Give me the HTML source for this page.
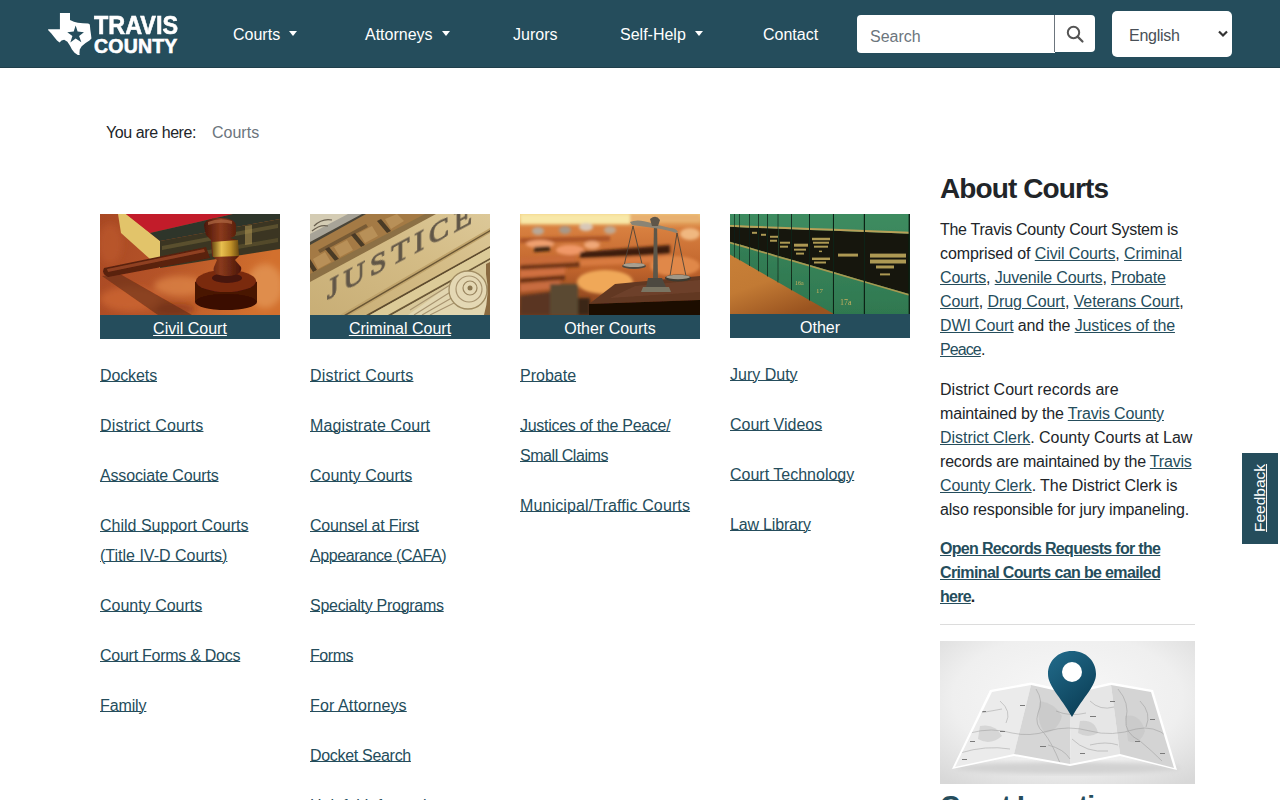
<!DOCTYPE html>
<html><head><meta charset="utf-8">
<style>
*{box-sizing:border-box;margin:0;padding:0}
html,body{width:1280px;height:800px;overflow:hidden;background:#fff}
body{font-family:"Liberation Sans",sans-serif;font-size:16px;color:#212529;position:relative}
.abs{position:absolute}
#hdr{position:absolute;left:0;top:0;width:1280px;height:68px;background:#254d5c}
.nav{position:absolute;top:25px;color:#fff;font-size:16px;line-height:20px;white-space:nowrap}
.caret{display:inline-block;width:0;height:0;border-top:5px solid #fff;border-left:4.5px solid transparent;border-right:4.5px solid transparent;vertical-align:4px;margin-left:9px}
a{color:#254d5c;text-decoration:underline}
.lnk{position:absolute;font-size:16px;line-height:30px;white-space:nowrap;color:#254d5c}
.lnk a{text-decoration-thickness:1px;text-underline-offset:0px}
.card{position:absolute;top:214px;width:180px;height:125px}
.card .img{position:absolute;left:0;top:0;width:180px;height:101px;overflow:hidden}
.card .cap{position:absolute;left:0;top:101px;width:180px;height:24px;background:#254d5c;color:#fff;text-align:center;font-size:16px;line-height:28px;white-space:nowrap}
.card .cap a{color:#fff}
.side{position:absolute;left:940px;font-size:16px;line-height:24px;white-space:nowrap;color:#212529}
.side a{color:#254d5c}
</style></head>
<body>
<div id="hdr">
  <div class="abs" style="left:0;top:67px;width:1280px;height:1px;background:#203f4b"></div>
  <svg class="abs" style="left:44px;top:8px" width="52" height="52" viewBox="0 0 800 800">
    <path fill="#fff" d="M245,75 L400,75 L400,185 L460,210 L520,225 L600,235 L680,240 L705,255 L712,330 L722,400 L730,470 L700,500 L640,540 L580,590 L550,640 L545,700 L550,722 L520,722 L470,690 L430,640 L400,580 L360,520 L310,490 L270,500 L240,530 L200,500 L150,440 L110,390 L62,340 L65,325 L245,325 Z"/>
    <path fill="#254d5c" d="M487,270 L517,362 L615,372 L540,430 L575,527 L487,470 L405,530 L437,432 L358,372 L457,362 Z"/>
  </svg>
  <div class="abs" style="left:94px;top:11px;color:#fff;font-weight:700;font-size:25px;line-height:28px;transform:scaleX(0.936);transform-origin:0 0;-webkit-text-stroke:0.6px #fff">TRAVIS</div>
  <div class="abs" style="left:94px;top:36px;color:#fff;font-weight:700;font-size:19.5px;line-height:20px;letter-spacing:0.2px;-webkit-text-stroke:0.6px #fff">COUNTY</div>

  <div class="nav" style="left:233px">Courts<span class="caret"></span></div>
  <div class="nav" style="left:365px">Attorneys<span class="caret"></span></div>
  <div class="nav" style="left:513px">Jurors</div>
  <div class="nav" style="left:620px">Self-Help<span class="caret"></span></div>
  <div class="nav" style="left:763px">Contact</div>

  <div class="abs" style="left:857px;top:15px;width:198px;height:38px;background:#fff;border-radius:4px 0 0 4px"></div>
  <div class="abs" style="left:870px;top:27px;color:#6c757d;font-size:16px;line-height:20px">Search</div>
  <div class="abs" style="left:1054px;top:15px;width:41px;height:37px;background:#fff;border-left:1px solid #6c757d;border-radius:0 4px 4px 0"></div>
  <svg class="abs" style="left:1065px;top:24px" width="20" height="20" viewBox="0 0 20 20"><circle cx="8.5" cy="8.5" r="5.7" fill="none" stroke="#555" stroke-width="2"/><path d="M12.6,12.6 L17.5,17.5" stroke="#555" stroke-width="2.2" stroke-linecap="round"/></svg>

  <div class="abs" style="left:1112px;top:11px;width:120px;height:46px;background:#fff;border-radius:5px"></div>
  <div class="abs" style="left:1129px;top:26px;color:#495057;font-size:16px;line-height:20px;letter-spacing:-0.25px">English</div>
  <svg class="abs" style="left:1217px;top:29px" width="12" height="10" viewBox="0 0 12 10"><path d="M2,2.5 L6,6.5 L10,2.5" fill="none" stroke="#333" stroke-width="2.2"/></svg>
</div>

<div class="abs" style="left:106px;top:123px;font-size:16px;line-height:20px;white-space:nowrap;color:#212529;letter-spacing:-0.42px">You are here:</div>
<div class="abs" style="left:212px;top:123px;font-size:16px;line-height:20px;white-space:nowrap;color:#6c757d">Courts</div>

<!-- cards -->
<div class="card" style="left:100px"><div class="img"><svg width="180" height="101" viewBox="0 0 180 101">
<defs>
<linearGradient id="wood1" x1="0" y1="0" x2="1" y2="0.2"><stop offset="0" stop-color="#a84824"/><stop offset="0.45" stop-color="#b65428"/><stop offset="1" stop-color="#d2702e"/></linearGradient>
<linearGradient id="gold1" x1="0" y1="0" x2="1" y2="0"><stop offset="0" stop-color="#6a4a10"/><stop offset="0.35" stop-color="#e8c050"/><stop offset="0.7" stop-color="#c09028"/><stop offset="1" stop-color="#6a4a10"/></linearGradient>
<linearGradient id="hd1" x1="0" y1="0" x2="1" y2="0"><stop offset="0" stop-color="#4a1608"/><stop offset="0.45" stop-color="#8a3a1c"/><stop offset="1" stop-color="#4a1608"/></linearGradient>
<filter id="bl1"><feGaussianBlur stdDeviation="0.7"/></filter>
<filter id="bl1b"><feGaussianBlur stdDeviation="3"/></filter>
</defs>
<rect width="180" height="101" fill="url(#wood1)"/>
<g filter="url(#bl1b)">
<ellipse cx="30" cy="85" rx="30" ry="12" fill="#d06a34" opacity="0.7"/>
<ellipse cx="80" cy="72" rx="26" ry="10" fill="#e08848" opacity="0.7"/>
<ellipse cx="165" cy="72" rx="18" ry="22" fill="#e8a060" opacity="0.6"/>
<ellipse cx="10" cy="30" rx="12" ry="20" fill="#c05a2c" opacity="0.6"/>
<ellipse cx="75" cy="95" rx="20" ry="6" fill="#7a2a10" opacity="0.5"/>
</g>
<g filter="url(#bl1)">
<path d="M2,62 L20,60 L92,101 L58,101 Z" fill="#5a2410" opacity="0.55"/>
<path d="M18,0 L26,0 L60,27 L60,54 L21,19 Z" fill="#e2c46a"/>
<path d="M26,0 L133,0 L50,19 Z" fill="#c21e2a"/>
<path d="M50,19 L133,0 L180,0 L180,5 L60,27 Z" fill="#2e342c"/>
<path d="M60,27 L180,5 L180,35 L60,54 Z" fill="#3a3622"/>
<path d="M62,32 L178,10 L178,14 L62,36 Z" fill="#7a6a3a" opacity="0.5"/>
<path d="M62,44 L178,24 L178,28 L62,48 Z" fill="#7a6a3a" opacity="0.4"/>
<path d="M145,12 L152,11 L152,30 L145,31 Z" fill="#a89050" opacity="0.6"/>
<path d="M4,54 L106,33 L110,44 L8,63 Q1,60 4,54 Z" fill="#5a200e"/>
<path d="M7,55 L104,35 L105,38 L8,58 Z" fill="#9c4a26" opacity="0.8"/>
<ellipse cx="126" cy="70" rx="31" ry="12" fill="#4a1406"/>
<rect x="95" y="68" width="62" height="20" fill="#4a1406"/>
<ellipse cx="126" cy="88" rx="31" ry="8" fill="#3a1004"/>
<ellipse cx="126" cy="67" rx="30" ry="11" fill="#7a2a10"/>
<ellipse cx="127" cy="64" rx="15" ry="5" fill="#3a1006" opacity="0.8"/>
<path d="M104,12 Q104,4 120,4 Q136,4 136,12 L136,19 Q136,23 130,24 L137,26 L139,42 L135,46 L141,53 Q143,61 128,62 Q111,62 114,53 L117,46 L112,42 L111,26 L106,21 Z" fill="url(#hd1)"/>
<path d="M112,28 L138,26 L139,42 L113,43 Z" fill="url(#gold1)"/>
<path d="M108,8 Q120,3 132,7 L132,10 Q120,7 108,11 Z" fill="#b06a44" opacity="0.7"/>
</g>
</svg></div><div class="cap"><a>Civil Court</a></div></div>
<div class="card" style="left:310px"><div class="img"><svg width="180" height="101" viewBox="0 0 180 101">
<defs>
<linearGradient id="st1" x1="0" y1="1" x2="1" y2="0"><stop offset="0" stop-color="#c8ae76"/><stop offset="0.6" stop-color="#d4bc86"/><stop offset="1" stop-color="#dcc898"/></linearGradient>
<filter id="bl2"><feGaussianBlur stdDeviation="0.6"/></filter>
</defs>
<rect width="180" height="101" fill="url(#st1)"/>
<g filter="url(#bl2)">
<path d="M0,0 L124,0 L0,67 Z" fill="#a47a44"/>
<path d="M0,0 L56,0 L0,31 Z" fill="#4a4438"/>
<path d="M0,0 L52,0 L0,28 Z" fill="#a8a498"/>
<path d="M0,0 L38,0 L0,20 Z" fill="#d4ccb4"/>
<path d="M4,12 Q12,4 22,6 M2,17 Q10,10 18,12" stroke="#6a6050" stroke-width="1.2" fill="none"/>
<g fill="#b89058">
<path d="M3,45 L15,38 L21,48 L8,55 Z"/><path d="M24,33 L37,26 L43,36 L30,43 Z"/><path d="M49,19 L62,12 L68,22 L55,29 Z"/><path d="M75,5 L87,0 L94,7 L81,15 Z"/>
</g>
<g fill="#4a3a26">
<path d="M19,33 L29,45 L25,47 L15,35 Z"/><path d="M45,19 L55,31 L51,33 L41,21 Z"/><path d="M71,5 L81,17 L77,19 L67,7 Z"/><path d="M0,45 L7,56 L3,58 L0,53 Z"/>
<path d="M8,36 L56,10 L58,13 L10,39 Z" opacity="0.5"/>
</g>
<path d="M0,60 L115,0 L126,0 L0,68 Z" fill="#8c7044"/>
<path d="M30,101 L180,14 L180,19 L40,101 Z" fill="#c0a46c"/>
<path d="M34,101 L180,16 L180,17.5 L37,101 Z" fill="#6a5634"/>
<path d="M56,101 L180,32 L180,34 L60,101 Z" fill="#5e4c2e"/>
<path d="M60,101 L180,34 L180,44 L78,101 Z" fill="#dccb98"/>
<path d="M78,101 L180,44 L180,46 L82,101 Z" fill="#6a5838"/>
<path d="M82,101 L180,46 L180,101 Z" fill="#d8c89a"/>
<path d="M98,101 L150,64 Q168,56 176,70 L180,70 L180,101 Z" fill="#e2d6b0"/>
<path d="M100,96 L148,66 M104,101 L150,72 M112,101 L152,78 M120,101 L154,84" stroke="#a89470" stroke-width="1.1" fill="none"/>
<circle cx="158" cy="76" r="19" fill="#e4d8b4"/>
<circle cx="158" cy="76" r="19" fill="none" stroke="#a08c62" stroke-width="1.3"/>
<circle cx="159" cy="75" r="13" fill="none" stroke="#a89470" stroke-width="1.2"/>
<circle cx="160" cy="74" r="7" fill="none" stroke="#9a8660" stroke-width="1.2"/>
<circle cx="160" cy="74" r="2.5" fill="#8a7650"/>
<path d="M176,50 L180,48 L180,101 L174,101 Q180,80 176,60 Z" fill="#8a6a40"/>
</g>
<g transform="translate(17,86) skewY(-28)" filter="url(#bl2)">
<text x="0" y="0" font-family="Liberation Serif" font-size="30" fill="#5e5446" stroke="#6a5e4c" stroke-width="1.1" textLength="145" lengthAdjust="spacing">JUSTICE</text>
</g>
</svg></div><div class="cap"><a>Criminal Court</a></div></div>
<div class="card" style="left:520px"><div class="img"><svg width="180" height="101" viewBox="0 0 180 101">
<defs>
<linearGradient id="ct1" x1="0" y1="0" x2="0" y2="1"><stop offset="0" stop-color="#f0d080"/><stop offset="0.14" stop-color="#d88040"/><stop offset="0.55" stop-color="#c0642c"/><stop offset="1" stop-color="#7a3a1a"/></linearGradient>
<filter id="bl3"><feGaussianBlur stdDeviation="1.8"/></filter>
<filter id="bl3b"><feGaussianBlur stdDeviation="0.45"/></filter>
</defs>
<rect width="180" height="101" fill="url(#ct1)"/>
<g filter="url(#bl3)">
<rect x="0" y="0" width="110" height="10" fill="#f8e8a8"/>
<rect x="110" y="0" width="70" height="8" fill="#e8b070"/>
<ellipse cx="18" cy="17" rx="6" ry="4" fill="#b8a898"/>
<ellipse cx="45" cy="16" rx="6" ry="4" fill="#a89888"/>
<ellipse cx="66" cy="13" rx="7" ry="4" fill="#d8c8b8"/>
<ellipse cx="90" cy="16" rx="6" ry="4" fill="#c0a890"/>
<path d="M0,24 L90,22 L90,27 L0,29 Z" fill="#a04a20" opacity="0.8"/>
<ellipse cx="20" cy="30" rx="14" ry="4" fill="#f0a070"/>
<ellipse cx="50" cy="36" rx="14" ry="5" fill="#f09868"/>
<ellipse cx="72" cy="31" rx="8" ry="4" fill="#f0a878"/>
<path d="M14,33 L30,32 L30,37 L14,38 Z" fill="#3a2410"/>
<path d="M60,38 L150,31 L150,41 L60,44 Z" fill="#3e1a0a"/>
<path d="M0,44 L55,41 L55,48 L0,51 Z" fill="#c86a38"/>
<path d="M0,56 L45,52 L45,60 L0,64 Z" fill="#d07040"/>
<path d="M0,70 L40,66 L40,74 L0,78 Z" fill="#c86c40"/>
<path d="M0,51 L60,48 L60,53 L0,56 Z" fill="#5a2810" opacity="0.8"/>
<path d="M0,64 L45,61 L45,66 L0,69 Z" fill="#5a2810" opacity="0.8"/>
<path d="M60,46 L150,40 L150,48 L60,52 Z" fill="#d87a40"/>
<ellipse cx="85" cy="68" rx="28" ry="12" fill="#f0a858"/>
<path d="M0,82 L30,78 L30,101 L0,101 Z" fill="#5a3420"/>
<rect x="30" y="70" width="28" height="31" fill="#5a4a30"/>
<rect x="58" y="84" width="12" height="17" fill="#3a2818"/>
<ellipse cx="155" cy="52" rx="25" ry="10" fill="#e08848"/>
<ellipse cx="170" cy="20" rx="10" ry="6" fill="#f0b880"/>
</g>
<g filter="url(#bl3b)">
<path d="M69,90 L95,70 L180,62 L180,86 Z" fill="#623822"/>
<path d="M90,84 L115,72 L180,66 L180,78 Z" fill="#744630" opacity="0.6"/>
<path d="M69,90 L180,86 L180,101 L69,101 Z" fill="#1a0c06"/>
<path d="M134,6 L137,6 L138,68 L133,68 Z" fill="#5c564a"/>
<path d="M110,8 Q118,4 134,10 L150,14 Q156,14 158,18 L156,19 Q148,16 134,14 L112,11 Z" fill="#8a8474"/>
<path d="M113,12 L104,52 M113,12 L122,50 M157,19 L150,62 M157,19 L166,62" stroke="#4e4438" stroke-width="0.9" fill="none"/>
<ellipse cx="114" cy="52" rx="12" ry="3" fill="#4e4a40"/>
<ellipse cx="114" cy="51" rx="11" ry="2" fill="#a8a090"/>
<ellipse cx="158" cy="64" rx="13" ry="3.5" fill="#3e3a30"/>
<ellipse cx="158" cy="63" rx="12" ry="2.2" fill="#a09888"/>
<path d="M128,64 L142,64 L146,73 L126,73 Z" fill="#4e4a40"/>
<path d="M123,73 L149,73 L151,78 L121,78 Z" fill="#7a7464"/>
<path d="M130,5 Q136,0 140,6 L138,12 L132,12 Z" fill="#5e564a"/>
</g>
</svg></div><div class="cap">Other Courts</div></div>
<div class="card" style="left:730px;top:214px;height:124px"><div class="img" style="height:100px"><svg width="180" height="100" viewBox="0 0 180 101" preserveAspectRatio="none">
<defs>
<linearGradient id="fl1" x1="0" y1="0" x2="0.6" y2="1"><stop offset="0" stop-color="#c88038"/><stop offset="0.5" stop-color="#c27a34"/><stop offset="1" stop-color="#9a5420"/></linearGradient>
<linearGradient id="gr1" x1="0" y1="0" x2="0" y2="1"><stop offset="0" stop-color="#3e8c60"/><stop offset="1" stop-color="#2f7850"/></linearGradient>
<filter id="bl4"><feGaussianBlur stdDeviation="0.5"/></filter>
</defs>
<rect width="180" height="101" fill="#1e3a28"/>
<path d="M0,38 L0,101 L106,101 Z" fill="url(#fl1)"/>
<g filter="url(#bl4)">
<path d="M0,0 L5,0 L5,43.9 L0,41.0 Z" fill="url(#gr1)"/><path d="M0,13.0 L5,13.2 L5,29.5 L0,28.0 Z" fill="#15160e"/><path d="M0,11.0 L5,11.2 L5,13.2 L0,13.0 Z" fill="#b8a058"/><path d="M0,28.0 L5,29.5 L5,31.3 L0,29.8 Z" fill="#a89850"/><path d="M4.38,0 L5,0 L5,43.9 L4.38,43.9 Z" fill="#0e2418"/><path d="M5,0 L10,0 L10,46.8 L5,43.9 Z" fill="url(#gr1)"/><path d="M5,13.2 L10,13.4 L10,30.9 L5,29.5 Z" fill="#15160e"/><path d="M5,11.2 L10,11.4 L10,13.4 L5,13.2 Z" fill="#b8a058"/><path d="M5,29.5 L10,30.9 L10,32.7 L5,31.3 Z" fill="#a89850"/><path d="M9.36,0 L10,0 L10,46.8 L9.36,46.8 Z" fill="#0e2418"/><path d="M10,0 L20,0 L20,52.6 L10,46.8 Z" fill="url(#gr1)"/><path d="M10,13.4 L20,13.8 L20,33.9 L10,30.9 Z" fill="#15160e"/><path d="M10,11.4 L20,11.8 L20,13.8 L10,13.4 Z" fill="#b8a058"/><path d="M10,30.9 L20,33.9 L20,35.7 L10,32.7 Z" fill="#a89850"/><path d="M19.31,0 L20,0 L20,52.6 L19.31,52.6 Z" fill="#0e2418"/><path d="M20,0 L29,0 L29,57.8 L20,52.6 Z" fill="url(#gr1)"/><path d="M20,13.8 L29,14.1 L29,36.5 L20,33.9 Z" fill="#15160e"/><path d="M20,11.8 L29,12.1 L29,14.1 L20,13.8 Z" fill="#b8a058"/><path d="M20,33.9 L29,36.5 L29,38.3 L20,35.7 Z" fill="#a89850"/><path d="M28.27,0 L29,0 L29,57.8 L28.27,57.8 Z" fill="#0e2418"/><path d="M29,0 L38,0 L38,63.0 L29,57.8 Z" fill="url(#gr1)"/><path d="M29,14.1 L38,14.5 L38,39.2 L29,36.5 Z" fill="#15160e"/><path d="M29,12.1 L38,12.5 L38,14.5 L29,14.1 Z" fill="#b8a058"/><path d="M29,36.5 L38,39.2 L38,41.0 L29,38.3 Z" fill="#a89850"/><path d="M37.23,0 L38,0 L38,63.0 L37.23,63.0 Z" fill="#0e2418"/><path d="M38,0 L48.5,0 L48.5,69.1 L38,63.0 Z" fill="url(#gr1)"/><path d="M38,14.5 L48.5,14.9 L48.5,42.3 L38,39.2 Z" fill="#15160e"/><path d="M38,12.5 L48.5,12.9 L48.5,14.9 L38,14.5 Z" fill="#b8a058"/><path d="M38,39.2 L48.5,42.3 L48.5,44.1 L38,41.0 Z" fill="#a89850"/><path d="M47.68,0 L48.5,0 L48.5,69.1 L47.68,69.1 Z" fill="#0e2418"/><path d="M48.5,0 L62,0 L62,77.0 L48.5,69.1 Z" fill="url(#gr1)"/><path d="M48.5,14.9 L62,15.4 L62,46.3 L48.5,42.3 Z" fill="#15160e"/><path d="M48.5,12.9 L62,13.4 L62,15.4 L48.5,14.9 Z" fill="#b8a058"/><path d="M48.5,42.3 L62,46.3 L62,48.1 L48.5,44.1 Z" fill="#a89850"/><path d="M61.12,0 L62,0 L62,77.0 L61.12,77.0 Z" fill="#0e2418"/><path d="M62,0 L80,0 L80,87.4 L62,77.0 Z" fill="url(#gr1)"/><path d="M62,15.4 L80,16.1 L80,51.6 L62,46.3 Z" fill="#15160e"/><path d="M62,13.4 L80,14.1 L80,16.1 L62,15.4 Z" fill="#b8a058"/><path d="M62,46.3 L80,51.6 L80,53.4 L62,48.1 Z" fill="#a89850"/><path d="M79.04,0 L80,0 L80,87.4 L79.04,87.4 Z" fill="#0e2418"/><path d="M80,0 L104,0 L104,101.0 L80,87.4 Z" fill="url(#gr1)"/><path d="M80,16.1 L104,17.0 L104,58.6 L80,51.6 Z" fill="#15160e"/><path d="M80,14.1 L104,15.0 L104,17.0 L80,16.1 Z" fill="#b8a058"/><path d="M80,51.6 L104,58.6 L104,60.4 L80,53.4 Z" fill="#a89850"/><path d="M102.94,0 L104,0 L104,101.0 L102.94,101.0 Z" fill="#0e2418"/><path d="M104,0 L135,0 L135,101.0 L104,101.0 Z" fill="url(#gr1)"/><path d="M104,17.0 L135,18.2 L135,67.8 L104,58.6 Z" fill="#15160e"/><path d="M104,15.0 L135,16.2 L135,18.2 L104,17.0 Z" fill="#b8a058"/><path d="M104,58.6 L135,67.8 L135,69.5 L104,60.4 Z" fill="#a89850"/><path d="M133.80,0 L135,0 L135,101.0 L133.80,101.0 Z" fill="#0e2418"/><path d="M135,0 L180,0 L180,101.0 L135,101.0 Z" fill="url(#gr1)"/><path d="M135,18.2 L180,20.0 L180,81.0 L135,67.8 Z" fill="#15160e"/><path d="M135,16.2 L180,18.0 L180,20.0 L135,18.2 Z" fill="#b8a058"/><path d="M135,67.8 L180,81.0 L180,82.8 L135,69.5 Z" fill="#a89850"/><path d="M178.60,0 L180,0 L180,101.0 L178.60,101.0 Z" fill="#0e2418"/>
<g fill="#c8b060" opacity="0.85">
<rect x="82" y="24" width="18" height="2.5"/><rect x="83" y="28" width="16" height="2"/><rect x="84" y="32" width="14" height="2"/><rect x="89" y="37" width="3" height="1.5"/>
<rect x="82" y="44" width="18" height="2.5"/><rect x="84" y="48" width="12" height="2"/>
<rect x="108" y="40" width="20" height="3"/>
<rect x="140" y="40" width="36" height="4"/><rect x="140" y="46" width="36" height="4"/><rect x="146" y="52" width="18" height="3"/><rect x="150" y="60" width="10" height="2"/>
<rect x="64" y="30" width="14" height="3"/><rect x="64" y="35" width="12" height="2"/><rect x="66" y="39" width="8" height="2"/>
<rect x="50" y="28" width="10" height="2"/><rect x="50" y="32" width="8" height="2"/>
<rect x="40" y="22" width="8" height="2"/><rect x="40" y="26" width="7" height="2"/>
<rect x="31" y="20" width="5" height="2"/><rect x="22" y="18" width="5" height="2"/>
</g>
<text x="86" y="80" font-family="Liberation Serif" font-size="7" fill="#c8b060">17</text>
<text x="110" y="92" font-family="Liberation Serif" font-size="8" fill="#c8b060">17a</text>
<text x="65" y="72" font-family="Liberation Serif" font-size="6" fill="#c8b060">16a</text>
</g>
</svg></div><div class="cap" style="top:100px">Other</div></div>

<!-- link columns -->
<div class="lnk" style="left:100px;top:361px"><a style="letter-spacing:-0.11px">Dockets</a></div>
<div class="lnk" style="left:100px;top:411px"><a style="letter-spacing:0.20px">District Courts</a></div>
<div class="lnk" style="left:100px;top:461px"><a style="letter-spacing:-0.15px">Associate Courts</a></div>
<div class="lnk" style="left:100px;top:511px"><a>Child Support Courts</a><br><a>(Title IV-D Courts)</a></div>
<div class="lnk" style="left:100px;top:591px"><a>County Courts</a></div>
<div class="lnk" style="left:100px;top:641px"><a style="letter-spacing:-0.26px">Court Forms &amp; Docs</a></div>
<div class="lnk" style="left:100px;top:691px"><a style="letter-spacing:-0.12px">Family</a></div>

<div class="lnk" style="left:310px;top:361px"><a style="letter-spacing:0.20px">District Courts</a></div>
<div class="lnk" style="left:310px;top:411px"><a style="letter-spacing:0.12px">Magistrate Court</a></div>
<div class="lnk" style="left:310px;top:461px"><a>County Courts</a></div>
<div class="lnk" style="left:310px;top:511px"><a style="letter-spacing:-0.20px">Counsel at First</a><br><a style="letter-spacing:-0.42px">Appearance (CAFA)</a></div>
<div class="lnk" style="left:310px;top:591px"><a style="letter-spacing:-0.28px">Specialty Programs</a></div>
<div class="lnk" style="left:310px;top:641px"><a style="letter-spacing:-0.43px">Forms</a></div>
<div class="lnk" style="left:310px;top:691px"><a style="letter-spacing:0.12px">For Attorneys</a></div>
<div class="lnk" style="left:310px;top:741px"><a style="letter-spacing:-0.31px">Docket Search</a></div>
<div class="lnk" style="left:310px;top:791px"><a>Helpful Information</a></div>

<div class="lnk" style="left:520px;top:361px"><a>Probate</a></div>
<div class="lnk" style="left:520px;top:411px"><a style="letter-spacing:-0.28px">Justices of the Peace/</a><br><a style="letter-spacing:-0.45px">Small Claims</a></div>
<div class="lnk" style="left:520px;top:491px"><a style="letter-spacing:0.12px">Municipal/Traffic Courts</a></div>

<div class="lnk" style="left:730px;top:360px"><a>Jury Duty</a></div>
<div class="lnk" style="left:730px;top:410px"><a>Court Videos</a></div>
<div class="lnk" style="left:730px;top:460px"><a>Court Technology</a></div>
<div class="lnk" style="left:730px;top:510px"><a style="letter-spacing:-0.18px">Law Library</a></div>

<!-- sidebar -->
<div class="side" style="top:172px;font-size:28px;line-height:34px;font-weight:700;letter-spacing:-0.9px">About Courts</div>
<div class="side" style="top:218px">
<div style="letter-spacing:-0.28px">The Travis County Court System is</div>
<div style="letter-spacing:-0.10px">comprised of <a>Civil Courts</a>, <a>Criminal</a></div>
<div style="letter-spacing:-0.17px"><a>Courts</a>, <a>Juvenile Courts</a>, <a>Probate</a></div>
<div style="letter-spacing:-0.08px"><a>Court</a>, <a>Drug Court</a>, <a>Veterans Court</a>,</div>
<div style="letter-spacing:-0.13px"><a>DWI Court</a> and the <a>Justices of the</a></div>
<div style="letter-spacing:-0.9px"><a>Peace</a>.</div>
</div>
<div class="side" style="top:378px">
<div style="letter-spacing:0.03px">District Court records are</div>
<div style="letter-spacing:-0.15px">maintained by the <a>Travis County</a></div>
<div style="letter-spacing:-0.03px"><a>District Clerk</a>. County Courts at Law</div>
<div style="letter-spacing:-0.2px">records are maintained by the <a>Travis</a></div>
<div style="letter-spacing:-0.07px"><a>County Clerk</a>. The District Clerk is</div>
<div style="letter-spacing:-0.17px">also responsible for jury impaneling.</div>
</div>
<div class="side" style="top:537px;font-weight:700">
<div style="letter-spacing:-0.68px"><a>Open Records Requests for the</a></div>
<div style="letter-spacing:-0.63px"><a>Criminal Courts can be emailed</a></div>
<div style="letter-spacing:-0.74px"><a>here</a>.</div>
</div>
<div class="abs" style="left:940px;top:624px;width:255px;height:1px;background:#dcdcdc"></div>
<svg class="abs" style="left:940px;top:641px" width="255" height="143" viewBox="0 0 255 143">
<defs>
<radialGradient id="mbg" cx="0.5" cy="0.4" r="0.75"><stop offset="0" stop-color="#f8f8f8"/><stop offset="0.6" stop-color="#efefef"/><stop offset="1" stop-color="#d8d8d8"/></radialGradient>
<linearGradient id="pin" x1="0" y1="0" x2="0.6" y2="1"><stop offset="0" stop-color="#226c8c"/><stop offset="1" stop-color="#0c4058"/></linearGradient>
<filter id="bl5"><feGaussianBlur stdDeviation="2"/></filter>
<clipPath id="mclip"><path d="M52,51 L91,44 L131,53 L171,44 L211,51 L234,127 L180,113 L130,123 L74,113 L15,126 Z"/></clipPath>
</defs>
<rect width="255" height="143" fill="url(#mbg)"/>
<ellipse cx="128" cy="127" rx="112" ry="6" fill="#d2d2d2" filter="url(#bl5)"/>
<path d="M50,49 L91,41.6 L132,50.5 L171,41.6 L213,49 L237,129 L180,115 L130,125 L74,115 L12,128 Z" fill="#fff"/>
<path d="M52,51 L91,44 L74,113 L15,126 Z" fill="#ebebeb"/>
<path d="M91,44 L131,53 L130,123 L74,113 Z" fill="#d6d6d6"/>
<path d="M131,53 L171,44 L180,113 L130,123 Z" fill="#e6e6e6"/>
<path d="M171,44 L211,51 L234,127 L180,113 Z" fill="#d4d4d4"/>
<g clip-path="url(#mclip)"><g fill="#c4c4c4" opacity="0.55">
<path d="M100,60 Q115,62 122,75 Q118,90 105,92 Q95,80 100,60 Z"/>
<path d="M185,75 Q200,72 205,90 Q200,105 188,100 Z"/>
<path d="M40,85 Q55,82 62,95 Q50,105 38,98 Z"/>
<path d="M140,80 Q155,78 158,92 Q148,98 138,92 Z"/>
</g>
<g stroke="#8a8a8a" stroke-width="0.6" fill="none" opacity="0.65">
<path d="M96,48 Q104,60 98,72 Q94,84 104,92 Q112,102 120,122"/>
<path d="M30,92 Q52,86 72,92 Q90,96 108,90 Q128,84 150,90 Q172,96 196,88 Q214,84 228,96"/>
<path d="M178,48 Q190,62 186,78 Q184,92 200,100 Q212,110 222,120"/>
<path d="M20,112 Q46,104 70,108 M132,98 Q146,112 168,110 M150,60 Q160,70 174,66"/>
<path d="M60,60 Q72,70 66,82 M108,104 Q124,108 130,118 M200,60 Q212,72 206,86"/>
<path d="M40,72 L62,68 M150,104 Q166,100 178,104 M116,70 Q130,76 146,72"/>
</g>
<g fill="#7a7a7a"><rect x="40" y="70" width="6" height="1"/><rect x="60" y="90" width="5" height="1"/><rect x="150" y="75" width="6" height="1"/><rect x="195" y="100" width="5" height="1"/><rect x="100" y="105" width="6" height="1"/><rect x="170" y="60" width="5" height="1"/><rect x="30" y="100" width="5" height="1"/><rect x="80" y="64" width="5" height="1"/><rect x="210" y="78" width="5" height="1"/><rect x="140" y="112" width="5" height="1"/><rect x="22" y="118" width="5" height="1"/><rect x="220" y="112" width="5" height="1"/></g></g>
<path d="M132,10 C118,10 108,20 108,33 C108,45 120,55 132,76 C144,55 156,45 156,33 C156,20 146,10 132,10 Z" fill="url(#pin)"/>
<circle cx="132" cy="31" r="10" fill="#fff"/>
</svg>
<div class="side" style="top:789px;font-size:28px;line-height:34px;font-weight:700;color:#254d5c;letter-spacing:-0.9px">Court Locations</div>

<!-- feedback -->
<div class="abs" style="left:1242px;top:453px;width:36px;height:91px;background:#254d5c"></div>
<div class="abs" style="left:1242px;top:453px;width:36px;height:91px;display:flex;align-items:center;justify-content:center"><div style="margin-top:-2px;transform:rotate(-90deg);color:#fff;font-size:15.5px;line-height:16px;white-space:nowrap;text-decoration:underline">Feedback</div></div>
</body></html>
